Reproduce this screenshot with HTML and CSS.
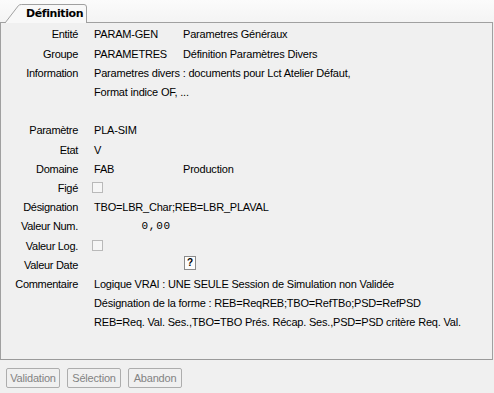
FILE: index.html
```html
<!DOCTYPE html>
<html lang="fr">
<head>
  <meta charset="UTF-8">
  <title>Définition</title>
  <link rel="stylesheet" href="styles.css">
</head>
<body>
  <div class="onglets">
    <div class="onglet">
      <svg class="onglet-fond" width="90" height="20" viewBox="0 0 90 20">
        <path d="M5 20 L18.5 2.5 Q19.5 1.5 21.5 1.5 L84 1.5 Q86.5 1.5 86.5 4 L86.5 20" fill="#f8f8f8" stroke="#a0a0a0" stroke-width="1"/>
      </svg>
      <span class="onglet-titre">Définition</span>
    </div>
  </div>

  <div class="panneau">
    <div class="fiche">
      <div class="lib">Entité</div><div>PARAM-GEN</div><div>Parametres Généraux</div>
      <div class="lib">Groupe</div><div>PARAMETRES</div><div>Définition Paramètres Divers</div>
      <div class="lib">Information</div><div class="large">Parametres divers : documents pour Lct Atelier Défaut,</div>
      <div class="lib"></div><div class="large">Format indice OF, ...</div>
      <div class="lib"></div><div class="large"></div>
      <div class="lib">Paramètre</div><div class="large">PLA-SIM</div>
      <div class="lib">Etat</div><div class="large">V</div>
      <div class="lib">Domaine</div><div>FAB</div><div>Production</div>
      <div class="lib">Figé</div><div class="large"><span class="case"></span></div>
      <div class="lib">Désignation</div><div class="large">TBO=LBR_Char;REB=LBR_PLAVAL</div>
      <div class="lib">Valeur Num.</div><div class="num">0,00</div><div></div>
      <div class="lib">Valeur Log.</div><div class="large"><span class="case"></span></div>
      <div class="lib">Valeur Date</div><div></div><div><span class="aide">?</span></div>
      <div class="lib">Commentaire</div><div class="large">Logique VRAI : UNE SEULE Session de Simulation non Validée</div>
      <div class="lib"></div><div class="large">Désignation de la forme : REB=ReqREB;TBO=RefTBo;PSD=RefPSD</div>
      <div class="lib"></div><div class="large">REB=Req. Val. Ses.,TBO=TBO Prés. Récap. Ses.,PSD=PSD critère Req. Val.</div>
    </div>
  </div>

  <div class="boutons">
    <button disabled>Validation</button>
    <button disabled>Sélection</button>
    <button disabled>Abandon</button>
  </div>
</body>
</html>
```

FILE: styles.css
```css
body {
  margin: 0;
  background: #f0f0f0;
  font-family: "Liberation Sans", Arial, sans-serif;
  font-size: 11px;
  color: #000;
  width: 494px;
}

/* onglets */
.onglets {
  height: 22px;
  background: linear-gradient(#fbfbfb, #f4f4f4);
  display: flex;
  align-items: flex-end;
}

.onglet {
  position: relative;
  width: 90px;
  height: 20px;
  margin-bottom: -1px;
  z-index: 1;
}

.onglet-fond {
  position: absolute;
  left: 0;
  top: 0;
}

.onglet-titre {
  position: absolute;
  left: 26px;
  top: 4px;
  font-weight: bold;
  font-size: 11px;
  font-family: "DejaVu Sans", sans-serif;
  letter-spacing: -0.4px;
}

/* panneau */
.panneau {
  width: 491px;
  height: 336px;
  border: 1px solid #a0a0a0;
  border-bottom-color: #9a9a9a;
  background: #f0f0f0;
}

.fiche {
  display: grid;
  grid-template-columns: 77px 105px 1fr;
  grid-auto-rows: 19.2px;
  padding-top: 2.4px;
  align-items: center;
}

.fiche > div {
  white-space: nowrap;
  line-height: 19px;
}

.lib {
  text-align: right;
  letter-spacing: -0.3px;
}

.fiche > div:not(.lib) {
  letter-spacing: -0.2px;
}

.fiche > .lib + div {
  padding-left: 16px;
}

.large {
  grid-column: span 2;
}

.num {
  font-family: "Liberation Mono", monospace;
  font-size: 11px;
  text-align: right;
  padding-right: 12px;
  letter-spacing: 0.8px !important;
}

.case {
  display: inline-block;
  width: 9px;
  height: 9px;
  border: 1px solid #b9b9b9;
  background: #f6f6f6;
  vertical-align: middle;
  margin-left: -2px;
  margin-top: -3px;
}

.aide {
  display: inline-block;
  width: 10px;
  height: 12px;
  line-height: 12px;
  border: 1px solid #8a8a8a;
  background: #fdfdfd;
  font-weight: bold;
  font-size: 10px;
  text-align: center;
  vertical-align: middle;
  margin-left: 1px;
  margin-top: -5px;
}

/* boutons */
.boutons {
  display: flex;
  gap: 7px;
  padding: 8px 0 0 6px;
}

button {
  font-family: "Liberation Sans", Arial, sans-serif;
  font-size: 11px;
  color: #838383;
  background: #f0f0f0;
  border: 1px solid #adadad;
  border-radius: 2px;
  height: 20px;
  padding: 0 3px;
  width: 54px;
  letter-spacing: -0.2px;
}
```
